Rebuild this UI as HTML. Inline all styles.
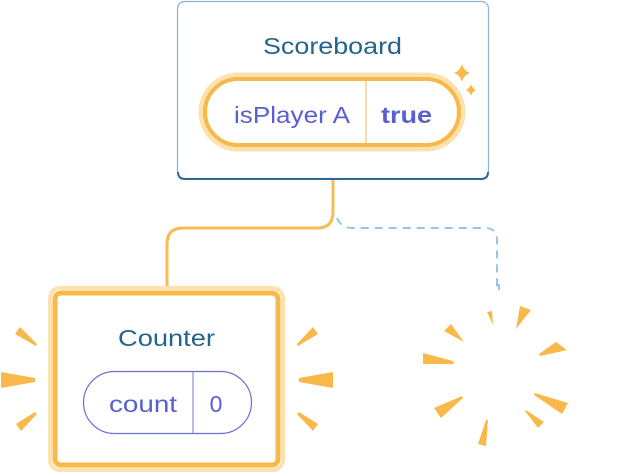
<!DOCTYPE html>
<html><head><style>
html,body{margin:0;padding:0;background:#fff;width:640px;height:476px;overflow:hidden}
svg{display:block}
text{font-family:"Liberation Sans",sans-serif}
</style></head><body>
<svg width="640" height="476" viewBox="0 0 640 476" xmlns="http://www.w3.org/2000/svg">
<path d="M333 179 V212 Q333 228 317 228 H183 Q167 228 167 244 V290" fill="none" stroke="#f8bb55" stroke-width="3"/>
<path d="M337 218 Q341 228 352 228 H485 Q497 228 497 240 V292" fill="none" stroke="#96c6e0" stroke-width="2" stroke-dasharray="8 6"/>
<rect x="177.5" y="1.5" width="311" height="177" rx="7" fill="#fff" stroke="#8fb2cc" stroke-width="1.2"/>
<path d="M178 172 Q178 179 185 179 H481 Q488 179 488 172" fill="none" stroke="#2c6a92" stroke-width="2"/>
<text x="263" y="54" font-size="23" fill="#23648a" textLength="139" lengthAdjust="spacingAndGlyphs">Scoreboard</text>
<rect x="202" y="76" width="260" height="72" rx="36" fill="none" stroke="#fde2b0" stroke-width="7"/>
<rect x="205" y="79" width="254" height="66" rx="33" fill="#fff" stroke="#f8b94a" stroke-width="4"/>
<line x1="366" y1="81" x2="366" y2="143" stroke="#f5c27a" stroke-width="1.2"/>
<text x="234" y="123" font-size="23" fill="#5a5fd0" textLength="116" lengthAdjust="spacingAndGlyphs">isPlayer A</text>
<text x="381" y="123" font-size="23" font-weight="bold" fill="#5a5fd0" textLength="51" lengthAdjust="spacingAndGlyphs">true</text>
<path d="M462 64 Q464 71 470 73 Q464 75 462 82 Q460 75 454 73 Q460 71 462 64Z" fill="#f8b94a"/>
<path d="M471 84 Q472 88 476 90 Q472 92 471 96 Q470 92 466 90 Q470 88 471 84Z" fill="#f8b94a"/>
<rect x="50" y="288" width="233" height="182" rx="10" fill="none" stroke="#fde2b0" stroke-width="4"/>
<rect x="55" y="293" width="223" height="172" rx="6" fill="#fff" stroke="#f8b94a" stroke-width="5"/>
<text x="118" y="346" font-size="23" fill="#23648a" textLength="97" lengthAdjust="spacingAndGlyphs">Counter</text>
<rect x="83.5" y="371.5" width="168" height="62" rx="31" fill="#fff" stroke="#6d6fd6" stroke-width="1.2"/>
<line x1="193" y1="372" x2="193" y2="433" stroke="#8c8ee0" stroke-width="1.2"/>
<text x="109" y="412" font-size="23" fill="#5a5fd0" textLength="68" lengthAdjust="spacingAndGlyphs">count</text>
<text x="216" y="412" font-size="23" fill="#5a5fd0" text-anchor="middle">0</text>
<g fill="#f8b94a">
<polygon points="15,334 20,327 37,344 36,346"/>
<polygon points="1,372 35,378 35,382 1,388"/>
<polygon points="16,424 21,431 37,414 35,412"/>
<polygon points="318,334 313,327 297,344 298,346"/>
<polygon points="333,372 299,378 299,382 333,388"/>
<polygon points="318,424 313,431 297,414 299,412"/>
<polygon points="487,312 492,311 493,325"/>
<polygon points="520,306 531,310 516,329"/>
<polygon points="556,342 567,350 540,356 539,354"/>
<polygon points="444,331 451,324 464,342"/>
<polygon points="423,353 423,364 454,364 453,361"/>
<polygon points="434,408 441,418 463,398 462,396"/>
<polygon points="568,403 562,414 534,395 535,393"/>
<polygon points="538,428 544,422 526,410 525,411"/>
<polygon points="478,444 486,446 488,420 486,420"/>
</g>
<rect x="498" y="284" width="2" height="6" fill="#96c6e0"/>
</svg>
</body></html>
